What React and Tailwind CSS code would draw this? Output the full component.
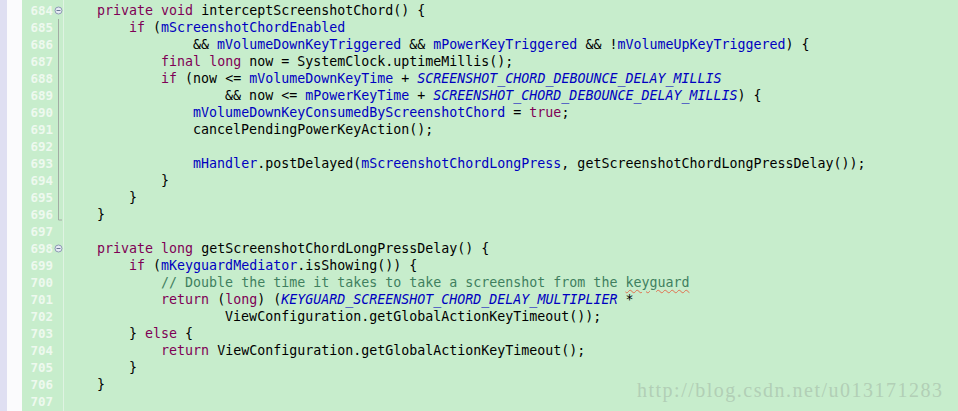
import React from 'react';

// token kinds: k keyword, f field, c constant, m comment, w squiggly word, t plain
const lines = [
  [['t', '    '], ['k', 'private'], ['t', ' '], ['k', 'void'], ['t', ' interceptScreenshotChord() {']],
  [['t', '        '], ['k', 'if'], ['t', ' ('], ['f', 'mScreenshotChordEnabled']],
  [['t', '                && '], ['f', 'mVolumeDownKeyTriggered'], ['t', ' && '], ['f', 'mPowerKeyTriggered'], ['t', ' && !'], ['f', 'mVolumeUpKeyTriggered'], ['t', ') {']],
  [['t', '            '], ['k', 'final'], ['t', ' '], ['k', 'long'], ['t', ' now = SystemClock.uptimeMillis();']],
  [['t', '            '], ['k', 'if'], ['t', ' (now <= '], ['f', 'mVolumeDownKeyTime'], ['t', ' + '], ['c', 'SCREENSHOT_CHORD_DEBOUNCE_DELAY_MILLIS']],
  [['t', '                    && now <= '], ['f', 'mPowerKeyTime'], ['t', ' + '], ['c', 'SCREENSHOT_CHORD_DEBOUNCE_DELAY_MILLIS'], ['t', ') {']],
  [['t', '                '], ['f', 'mVolumeDownKeyConsumedByScreenshotChord'], ['t', ' = '], ['k', 'true'], ['t', ';']],
  [['t', '                cancelPendingPowerKeyAction();']],
  [],
  [['t', '                '], ['f', 'mHandler'], ['t', '.postDelayed('], ['f', 'mScreenshotChordLongPress'], ['t', ', getScreenshotChordLongPressDelay());']],
  [['t', '            }']],
  [['t', '        }']],
  [['t', '    }']],
  [],
  [['t', '    '], ['k', 'private'], ['t', ' '], ['k', 'long'], ['t', ' getScreenshotChordLongPressDelay() {']],
  [['t', '        '], ['k', 'if'], ['t', ' ('], ['f', 'mKeyguardMediator'], ['t', '.isShowing()) {']],
  [['t', '            '], ['m', '// Double the time it takes to take a screenshot from the '], ['w', 'keyguard']],
  [['t', '            '], ['k', 'return'], ['t', ' ('], ['k', 'long'], ['t', ') ('], ['c', 'KEYGUARD_SCREENSHOT_CHORD_DELAY_MULTIPLIER'], ['t', ' *']],
  [['t', '                    ViewConfiguration.getGlobalActionKeyTimeout());']],
  [['t', '        } '], ['k', 'else'], ['t', ' {']],
  [['t', '            '], ['k', 'return'], ['t', ' ViewConfiguration.getGlobalActionKeyTimeout();']],
  [['t', '        }']],
  [['t', '    }']],
  [],
];

const tokenClass = {
  t: 'text-black',
  k: 'text-[#7f0055]',
  f: 'text-[#0000c0]',
  c: 'text-[#0000c0] italic',
  m: 'text-[#3f7f5f]',
  w: 'text-[#3f7f5f] underline decoration-wavy decoration-[#e07050] decoration-1 underline-offset-2',
};

const FoldIcon = () => (
  <svg width="9" height="17" viewBox="0 0 9 17">
    <circle cx="4.5" cy="8.5" r="3.5" fill="#e6eaf4" stroke="#8e9ab4" strokeWidth="1" />
    <line x1="2.5" y1="8.5" x2="6.5" y2="8.5" stroke="#6a7894" strokeWidth="1" />
  </svg>
);

const FoldMark = ({ index }) => {
  if (index === 0 || index === 14) return <FoldIcon />;
  if (index > 0 && index < 12) {
    return (
      <svg width="9" height="17" viewBox="0 0 9 17">
        <line x1="4.5" y1="0" x2="4.5" y2="17" stroke="#a3aba4" strokeWidth="1" />
      </svg>
    );
  }
  if (index === 12) {
    return (
      <svg width="9" height="17" viewBox="0 0 9 17">
        <line x1="4.5" y1="0" x2="4.5" y2="14" stroke="#a3aba4" strokeWidth="1" />
        <line x1="4.5" y1="14" x2="8" y2="14" stroke="#a3aba4" strokeWidth="1" />
      </svg>
    );
  }
  return <div className="h-[17px]" />;
};

export default function App() {
  return (
    <div className="relative flex h-[411px] w-[958px] overflow-hidden bg-[#c7edcc]">
      <div className="w-[7px] bg-[#dfdff2]" />
      <div className="w-[15px] bg-[#fbfbfd]" />

      {/* line numbers */}
      <div className="w-[32px] pt-[2px] font-['DejaVu_Sans_Mono',monospace] text-[12.5px] font-bold text-[#eef9ef]">
        {lines.map((_, i) => (
          <div key={i} className="h-[17px] pr-[1px] text-right leading-[17px]">
            {684 + i}
          </div>
        ))}
      </div>

      {/* folding gutter */}
      <div className="w-[9px] pt-[2px]">
        {lines.map((_, i) => (
          <div key={i} className="h-[17px]">
            <FoldMark index={i} />
          </div>
        ))}
      </div>

      <div className="w-px bg-[#dff3e2]" />

      {/* code */}
      <div className="flex-1 pl-px pt-[2px] font-['DejaVu_Sans_Mono',monospace] text-[13.3px]">
        {lines.map((line, i) => (
          <div key={i} className="h-[17px] whitespace-pre leading-[17px]">
            {line.map(([kind, text], j) => (
              <span key={j} className={tokenClass[kind]}>
                {text}
              </span>
            ))}
          </div>
        ))}
      </div>

      {/* watermark */}
      <div className="absolute left-[637px] top-[378px] font-['Liberation_Serif',serif] text-[20px] leading-[24px] tracking-[1.5px] text-[#b2cfb6]">
        http://blog.csdn.net/u013171283
      </div>
    </div>
  );
}
